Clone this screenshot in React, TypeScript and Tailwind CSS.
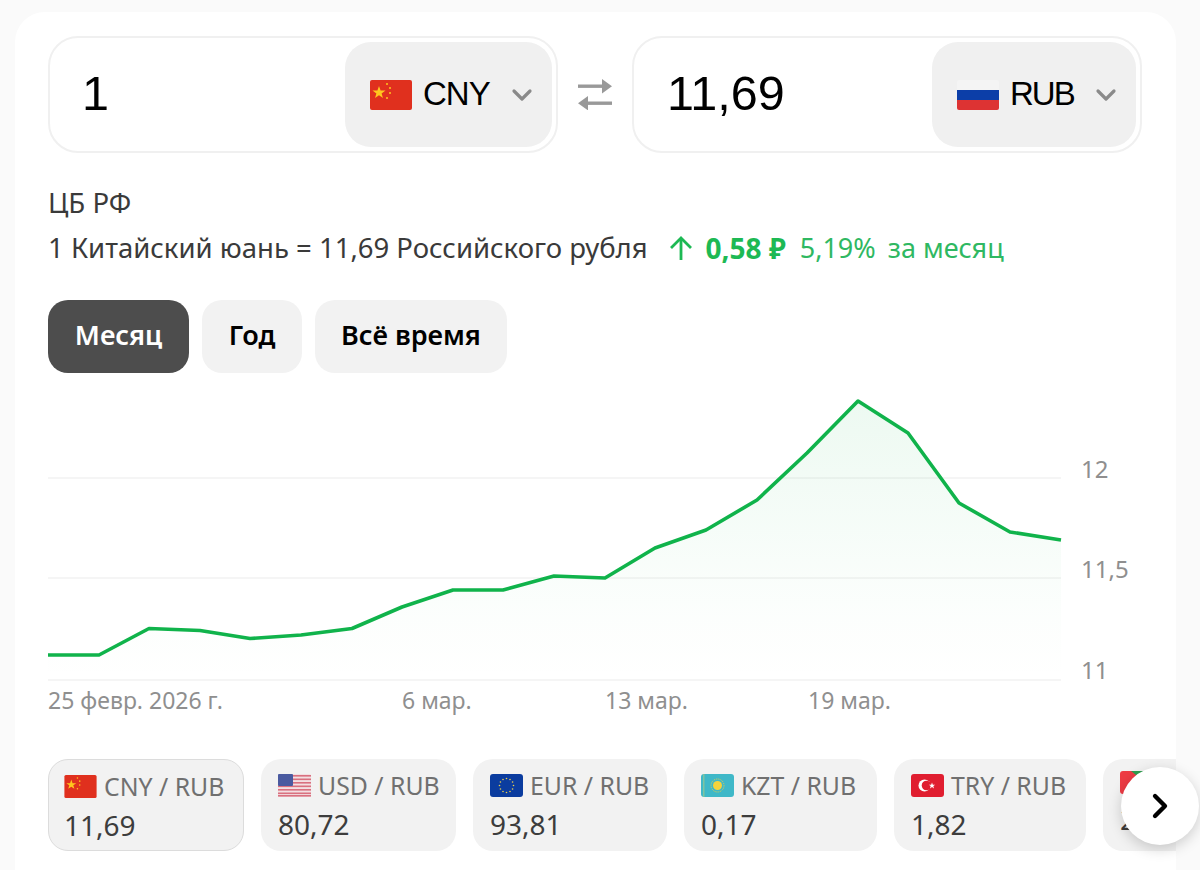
import { ChevronDown, ChevronRight } from 'lucide-react';

const line: [number, number][] = [
  [48, 655], [99, 655], [149, 628.5], [200, 630.5], [250, 638.5], [301, 635], [352, 628.5], [402, 607],
  [453, 590], [503, 590], [554, 576], [605, 578], [655, 548], [706, 530], [757, 500], [807, 453],
  [858, 401], [908, 433], [959, 503], [1010, 532], [1061, 540],
];
const linePoints = line.map(([x, y]) => `${x},${y}`).join(' ');

function CnFlag({ className }: { className: string }) {
  return (
    <svg viewBox="0 0 42 30" className={className}>
      <rect width="42" height="30" rx="2" fill="#e0301e" />
      <polygon points="9,6 10.6,10.6 15.5,10.6 11.6,13.5 13,18 9,15.3 5,18 6.4,13.5 2.5,10.6 7.4,10.6" fill="#ffc61e" />
      <circle cx="17" cy="4" r="1" fill="#ffc61e" />
      <circle cx="20" cy="8" r="1" fill="#ffc61e" />
      <circle cx="20" cy="13" r="1" fill="#ffc61e" />
      <circle cx="17" cy="18" r="1" fill="#ffc61e" />
    </svg>
  );
}

function RuFlag({ className }: { className: string }) {
  return (
    <svg viewBox="0 0 42 30" className={className}>
      <rect width="42" height="10" fill="#f4f4f4" />
      <rect y="10" width="42" height="10" fill="#0c3ea8" />
      <rect y="20" width="42" height="10" fill="#dd3333" />
    </svg>
  );
}

function UsFlag({ className }: { className: string }) {
  return (
    <svg viewBox="0 0 33 23" className={className}>
      <rect width="33" height="23" rx="2" fill="#f3dfe2" />
      {[1, 4.5, 8, 11.5, 15, 18.5, 21].map((y) => (
        <rect key={y} y={y} width="33" height="1.6" fill="#d9707f" />
      ))}
      <rect width="15" height="12" rx="1" fill="#4a5aa0" />
    </svg>
  );
}

function EuFlag({ className }: { className: string }) {
  const stars = Array.from({ length: 12 }, (_, i) => (i * Math.PI) / 6);
  return (
    <svg viewBox="0 0 33 23" className={className}>
      <rect width="33" height="23" rx="3" fill="#0b3c9f" />
      {stars.map((a) => (
        <circle key={a} cx={16.5 + 7 * Math.cos(a)} cy={11.5 + 7 * Math.sin(a)} r="0.8" fill="#e8cf50" />
      ))}
    </svg>
  );
}

function KzFlag({ className }: { className: string }) {
  return (
    <svg viewBox="0 0 33 23" className={className}>
      <rect width="33" height="23" rx="3" fill="#3fb8c8" />
      <rect x="2" width="1.5" height="23" fill="#7fc4a0" />
      <circle cx="16.5" cy="11.5" r="4.5" fill="#f5d33c" />
      <circle cx="16.5" cy="11.5" r="6.5" fill="none" stroke="#f5d33c" strokeWidth="1" strokeDasharray="1 1.2" />
    </svg>
  );
}

function TrFlag({ className }: { className: string }) {
  return (
    <svg viewBox="0 0 33 23" className={className}>
      <rect width="33" height="23" rx="3" fill="#e01e30" />
      <circle cx="13.5" cy="11.5" r="6" fill="#fff" />
      <circle cx="15.5" cy="11.5" r="4.8" fill="#e01e30" />
      <polygon points="21,8.5 21.8,10.7 24.2,10.7 22.3,12.1 23,14.4 21,13 19,14.4 19.7,12.1 17.8,10.7 20.2,10.7" fill="#fff" />
    </svg>
  );
}

function LastFlag({ className }: { className: string }) {
  return (
    <svg viewBox="0 0 33 23" className={className}>
      <rect width="33" height="23" rx="3" fill="#ee3b44" />
      <polygon points="11,0 33,0 33,10 16,4" fill="#2f9e4f" />
    </svg>
  );
}

function SwapIcon() {
  return (
    <svg viewBox="0 0 34 31" className="h-[31px] w-[34px]" fill="#999">
      <rect x="0" y="5.5" width="26" height="3.4" />
      <polygon points="24,0 34,7.2 24,14.4" />
      <rect x="8" y="22.5" width="26" height="3.4" />
      <polygon points="10,17 0,24.2 10,31.4" />
    </svg>
  );
}

function Converter({ value, code, flag, pickerW, pad, track }: { value: string; code: string; flag: React.ReactNode; pickerW: string; pad: string; track: string }) {
  return (
    <div className={`flex h-[117px] w-[510px] items-center justify-between rounded-[30px] border-2 border-[#f0f0f0] pr-[4px] ${pad}`}>
      <span className="pb-[2px] font-['Liberation_Sans',sans-serif] text-[48.5px] text-black">{value}</span>
      <div className={`flex h-[105px] items-center gap-[11px] rounded-[26px] bg-[#f0f0f0] pl-[25px] ${pickerW}`}>
        {flag}
        <span className={`pb-[2px] font-['Liberation_Sans',sans-serif] text-[33px] text-black ${track}`}>{code}</span>
        <ChevronDown className="ml-[5px] h-8 w-8 text-[#8a8a8a]" strokeWidth={2.4} />
      </div>
    </div>
  );
}

function Chip({ pair, value, flag, w, active }: { pair: string; value: string; flag: React.ReactNode; w: string; active?: boolean }) {
  return (
    <div className={`h-[92px] shrink-0 rounded-[20px] bg-[#f2f2f2] pt-[12px] ${w} ${active ? 'border border-[#dcdcdc] pl-[15px]' : 'pl-[17px]'}`}>
      <div className="flex items-center gap-[7px]">
        {flag}
        <span className="whitespace-nowrap text-[24.8px] leading-[28px] text-[#707070]">{pair}</span>
      </div>
      <div className="mt-[10px] text-[28px] leading-[30px] text-[#3d3d3d]">{value}</div>
    </div>
  );
}

export default function App() {
  return (
    <div className="relative h-[870px] w-[1200px] overflow-hidden bg-[#fafafa] pl-[15px] pt-3 font-['Noto_Sans',sans-serif]">
      <div className="h-[858px] w-[1161px] overflow-hidden rounded-t-[30px] bg-white pl-[33px] pt-6">
        <div className="flex w-[1094px] items-center justify-between">
          <Converter value="1" code="CNY" track="tracking-[-1px]" pad="pl-[32px]" pickerW="w-[207px]" flag={<CnFlag className="h-[30px] w-[42px] shrink-0" />} />
          <SwapIcon />
          <Converter value="11,69" code="RUB" track="tracking-[-2px]" pad="pl-[33px]" pickerW="w-[204px]" flag={<RuFlag className="h-[30px] w-[42px] shrink-0 rounded-[2px]" />} />
        </div>

        <div className="mt-[34px] text-[27.5px] leading-8 text-[#3a3a3a]">ЦБ РФ</div>
        <div className="mt-[13px] flex items-center whitespace-nowrap text-[27.5px] leading-8 text-[#3a3a3a]">
          <span>1 Китайский юань = 11,69 Российского рубля</span>
          <svg viewBox="0 0 24 26" className="ml-[21px] h-[26px] w-6" fill="none" stroke="#1db954" strokeWidth="2.8">
            <path d="M12 25V3" />
            <path d="M2 13L12 3l10 10" />
          </svg>
          <span className="ml-[13px] text-[28px] font-bold text-[#1db954]">0,58 ₽</span>
          <span className="ml-[14px] text-[27px] text-[#2fb862]">5,19%</span>
          <span className="ml-3 text-[27px] text-[#2fb862]">за месяц</span>
        </div>

        <div className="mt-[36px] flex gap-[13px] text-[27px] font-semibold">
          <div className="flex h-[73px] w-[141px] items-center justify-center rounded-[20px] bg-[#4d4d4d] pb-[2px] text-white">Месяц</div>
          <div className="flex h-[73px] w-[100px] items-center justify-center rounded-[20px] bg-[#f2f2f2] pb-[2px] text-black">Год</div>
          <div className="flex h-[73px] w-[192px] items-center justify-center rounded-[20px] bg-[#f2f2f2] pb-[2px] text-black">Всё время</div>
        </div>

        <svg viewBox="48 380 1100 340" className="mt-[7px] block h-[340px] w-[1100px]">
          <defs>
            <linearGradient id="area" x1="0" y1="401" x2="0" y2="680" gradientUnits="userSpaceOnUse">
              <stop offset="0" stopColor="#1db954" stopOpacity="0.08" />
              <stop offset="0.75" stopColor="#1db954" stopOpacity="0.015" />
              <stop offset="1" stopColor="#1db954" stopOpacity="0" />
            </linearGradient>
          </defs>
          <line x1="48" x2="1061" y1="478" y2="478" stroke="#f2f2f2" strokeWidth="1.5" />
          <line x1="48" x2="1061" y1="578" y2="578" stroke="#f2f2f2" strokeWidth="1.5" />
          <line x1="48" x2="1061" y1="680" y2="680" stroke="#f2f2f2" strokeWidth="1.5" />
          <polygon points={`48,680 ${linePoints} 1061,680`} fill="url(#area)" />
          <polyline points={linePoints} fill="none" stroke="#10b34b" strokeWidth="3.6" strokeLinejoin="round" />
          <g fill="#8f8f8f">
            <g fontSize="24">
              <text x="1081" y="478">12</text>
              <text x="1081" y="578">11,5</text>
              <text x="1081" y="679">11</text>
            </g>
            <g fontSize="23">
              <text x="48" y="709">25 февр. 2026 г.</text>
              <text x="402" y="709">6 мар.</text>
              <text x="605" y="709">13 мар.</text>
              <text x="808" y="709">19 мар.</text>
            </g>
          </g>
        </svg>

        <div className="mt-[39px] flex gap-[17px]">
          <Chip active pair="CNY / RUB" value="11,69" w="w-[196px]" flag={<CnFlag className="h-[23px] w-[33px] shrink-0" />} />
          <Chip pair="USD / RUB" value="80,72" w="w-[195px]" flag={<UsFlag className="h-[23px] w-[33px] shrink-0" />} />
          <Chip pair="EUR / RUB" value="93,81" w="w-[194px]" flag={<EuFlag className="h-[23px] w-[33px] shrink-0" />} />
          <Chip pair="KZT / RUB" value="0,17" w="w-[193px]" flag={<KzFlag className="h-[23px] w-[33px] shrink-0" />} />
          <Chip pair="TRY / RUB" value="1,82" w="w-[192px]" flag={<TrFlag className="h-[23px] w-[33px] shrink-0" />} />
          <Chip pair="" value="2" w="w-[192px]" flag={<LastFlag className="h-[23px] w-[33px] shrink-0" />} />
        </div>
      </div>

      <button className="absolute left-[1121px] top-[767px] flex h-[78px] w-[78px] items-center justify-center rounded-full bg-white shadow-[0_4px_14px_rgba(0,0,0,0.18)]">
        <ChevronRight className="h-10 w-10 text-black" strokeWidth={2.6} />
      </button>
    </div>
  );
}
